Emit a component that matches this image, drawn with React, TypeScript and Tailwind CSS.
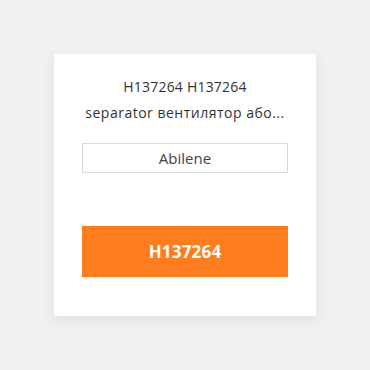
export default function App() {
  return (
    <div className="w-[370px] h-[370px] bg-[#f1f1f1] flex items-center justify-center" style={{ fontFamily: '"Open Sans", "Noto Sans", sans-serif' }}>
      <div className="w-[262px] h-[262px] bg-white shadow-[0_4px_14px_rgba(0,0,0,0.08)] px-[28px] pt-[20px] flex flex-col">
        <div className="text-[14px] leading-[26px] text-[#333] text-center">
          <div className="tracking-[0.2px]">H137264 H137264</div>
          <div className="whitespace-nowrap tracking-[0.5px]">separator вентилятор або...</div>
        </div>
        <div className="mt-[17px] h-[30px] border border-[#d9d9d9] flex items-center justify-center text-[15px] text-[#444]">
          Abilene
        </div>
        <button className="mt-[53px] h-[51px] w-full bg-[#ff7c1f] text-white font-bold text-[17px] tracking-[0.2px]">
          H137264
        </button>
      </div>
    </div>
  );
}
